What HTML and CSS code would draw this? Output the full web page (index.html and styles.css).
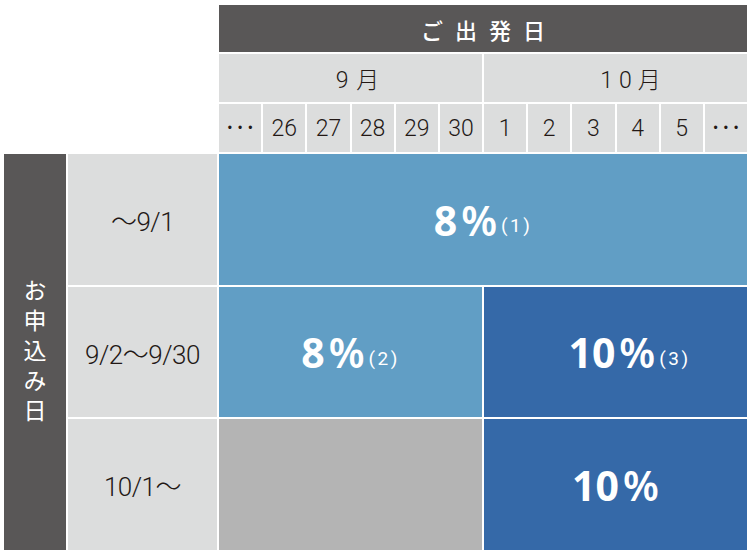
FILE: index.html
```html
<!DOCTYPE html>
<html lang="ja">
<head>
<meta charset="utf-8">
<link rel="stylesheet" href="styles.css">
</head>
<body>
<div class="table">
  <div class="corner"></div>
  <div class="head">ご出発日</div>
  <div class="month m9">9 月</div>
  <div class="month m10">10月</div>
  <div class="day dots">•••</div>
  <div class="day">26</div>
  <div class="day">27</div>
  <div class="day">28</div>
  <div class="day">29</div>
  <div class="day">30</div>
  <div class="day">1</div>
  <div class="day">2</div>
  <div class="day">3</div>
  <div class="day">4</div>
  <div class="day">5</div>
  <div class="day dots">•••</div>
  <div class="side"><span>お申込み日</span></div>
  <div class="label r1">～9/1</div>
  <div class="rate light full r1"><b>8<i>%</i></b><small>(1)</small></div>
  <div class="label r2">9/2～9/30</div>
  <div class="rate light half-l r2"><b>8<i>%</i></b><small>(2)</small></div>
  <div class="rate dark half-r r2 shift"><b>10<i>%</i></b><small>(3)</small></div>
  <div class="label r3">10/1～</div>
  <div class="rate none half-l r3"></div>
  <div class="rate dark half-r r3"><b>10<i>%</i></b></div>
</div>
</body>
</html>
```
FILE: styles.css
```css
* { box-sizing: border-box; }
html, body { margin: 0; background: #fff; }
body { padding: 5px 0 0 4px; font-family: "Roboto", "Noto Sans CJK JP", sans-serif; color: #231815; }
.table {
  display: grid;
  width: 743px;
  grid-template-columns: 62px 149px repeat(12, 1fr);
  grid-template-rows: 47px 48px 48px 131px 130px 131px;
  gap: 2px;
}
.corner { grid-column: 1 / 3; grid-row: 1 / 4; }
.head {
  grid-column: 3 / 15; grid-row: 1;
  background: #595757; color: #fff;
  display: flex; align-items: center; justify-content: center;
  font-family: "Noto Sans CJK JP", sans-serif; font-weight: 500;
  font-size: 22px; letter-spacing: 12px; padding-left: 12px;
}
.month {
  background: #dcdddd;
  display: flex; align-items: center; justify-content: center;
  font-family: "Roboto", "Noto Sans CJK JP", sans-serif; font-weight: 300;
  font-size: 23px;
  grid-column: span 6;
}
.m9 { padding-left: 14px; word-spacing: 2px; }
.m10 { letter-spacing: 6px; padding-left: 36px; }
.day {
  background: #dcdddd;
  display: flex; align-items: center; justify-content: center;
  font-size: 23px; font-weight: 300;
}
.dots { font-size: 12px; letter-spacing: 6px; padding-left: 6px; font-family: "DejaVu Sans", sans-serif; }
.side {
  grid-column: 1; grid-row: 4 / 7;
  background: #595757; color: #fff;
  display: flex; align-items: center; justify-content: center;
}
.side span {
  writing-mode: vertical-rl; text-orientation: upright;
  font-family: "Noto Sans CJK JP", sans-serif;
  font-size: 23px; letter-spacing: 7px; margin-top: 4px;
}
.label {
  grid-column: 2; background: #dcdddd;
  display: flex; align-items: center; justify-content: center;
  font-size: 26px; font-weight: 300; letter-spacing: -0.5px;
}
.r1 { grid-row: 4; }
.r2 { grid-row: 5; }
.r3 { grid-row: 6; }
.rate {
  display: flex; align-items: center; justify-content: center;
  color: #fff;
}
.shift { padding-left: 28px; }
.full { grid-column: 3 / 15; }
.half-l { grid-column: 3 / 9; }
.half-r { grid-column: 9 / 15; }
.light { background: #619ec5; }
.dark { background: #3569a8; }
.none { background: #b4b4b4; }
.rate b {
  font-family: "Noto Sans", sans-serif; font-weight: 700;
  font-size: 41px;
}
.rate b i { font-style: normal; font-weight: 600; margin-left: 4px; }
.rate small {
  font-family: "Roboto", sans-serif; font-weight: 400;
  font-size: 19px; letter-spacing: 2.5px; margin-top: 12px; margin-left: 4px;
}
```
